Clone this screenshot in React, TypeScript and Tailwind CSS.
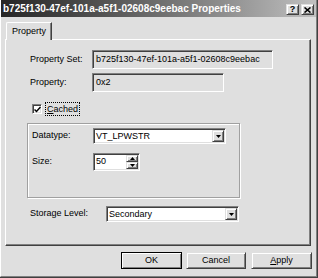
import React from "react";

const sunken =
  "border-t border-l border-t-[#808080] border-l-[#808080] border-r border-b border-r-white border-b-white shadow-[inset_1px_1px_0_#404040,inset_-1px_-1px_0_#dfdfdf]";
const raised =
  "border-t border-l border-t-[#dfdfdf] border-l-[#dfdfdf] border-r border-b border-r-[#404040] border-b-[#404040] shadow-[inset_1px_1px_0_#ffffff,inset_-1px_-1px_0_#808080]";

function DropArrow() {
  return (
    <svg width="5" height="3" viewBox="0 0 5 3">
      <path d="M0 0h5L2.5 3z" fill="#000" />
    </svg>
  );
}

function Combo({ value, width }: { value: string; width: string }) {
  return (
    <div className={`${width} h-[16px] bg-white flex items-center ${sunken}`}>
      <span className="flex-1 pl-[2px] leading-none">{value}</span>
      <div className={`w-[12px] h-[12px] mr-[1px] bg-[#dfdfdf] flex items-center justify-center ${raised}`}>
        <DropArrow />
      </div>
    </div>
  );
}

function Button({ label, className }: { label: React.ReactNode; className?: string }) {
  return (
    <div
      className={`h-[17px] flex items-center justify-center bg-[#dfdfdf] ${raised} ${className ?? ""}`}
    >
      {label}
    </div>
  );
}

export default function App() {
  return (
    <div
      className="w-[318px] h-[278px] flex flex-col bg-[#dfdfdf] border-r border-b border-[#404040] text-[9px] text-black"
      style={{ fontFamily: '"Liberation Sans", Arial, sans-serif' }}
    >
      <div className="flex-1 flex flex-col border-l border-l-white border-r border-b border-[#808080]">
        {/* title bar */}
        <div className="h-[17px] flex items-center justify-between pl-[2px] pr-[2px] bg-gradient-to-r from-[#262626] to-[#c0c0c0]">
          <span className="text-white font-bold text-[10px] leading-none">
            b725f130-47ef-101a-a5f1-02608c9eebac Properties
          </span>
          <div className="flex gap-[2px] pt-[2px]">
            <div className={`w-[13px] h-[11px] bg-[#dfdfdf] flex items-center justify-center font-bold text-[9px] leading-none ${raised}`}>
              ?
            </div>
            <div className={`w-[13px] h-[11px] bg-[#dfdfdf] flex items-center justify-center ${raised}`}>
              <svg width="7" height="6" viewBox="0 0 7 6">
                <path d="M0.5 0.5L6.5 5.5M6.5 0.5L0.5 5.5" stroke="#000" strokeWidth="1.6" />
              </svg>
            </div>
          </div>
        </div>

        {/* tab */}
        <div className="mt-[5px] ml-[5px] relative z-10 -mb-[1px] w-[46px] h-[18px] bg-[#dfdfdf] border-l border-t border-white rounded-tl-[2px] border-r border-r-[#404040] shadow-[inset_-1px_0_0_#808080] flex items-center justify-center">
          Property
        </div>

        {/* panel */}
        <div className="ml-[4px] w-[306px] h-[207px] flex flex-col border-l border-t border-white border-r border-b border-r-[#404040] border-b-[#404040] shadow-[inset_-1px_-1px_0_#808080]">
          <div className="mt-[10px] h-[19px] flex items-center pl-[24px]">
            <span className="w-[62px]">Property Set:</span>
            <div className={`w-[181px] h-[19px] flex items-center pl-[3px] ${sunken}`}>
              b725f130-47ef-101a-a5f1-02608c9eebac
            </div>
          </div>
          <div className="mt-[4px] h-[19px] flex items-center pl-[24px]">
            <span className="w-[62px]">Property:</span>
            <div className={`w-[132px] h-[19px] flex items-center pl-[3px] ${sunken}`}>0x2</div>
          </div>

          <div className="mt-[10px] h-[14px] flex items-center pl-[26px]">
            <div className={`w-[10px] h-[10px] bg-white flex items-center justify-center ${sunken}`}>
              <svg width="7" height="7" viewBox="0 0 7 7">
                <path d="M0.5 3.5L2.5 5.5L6.5 1" stroke="#000" strokeWidth="1.5" fill="none" />
              </svg>
            </div>
            <span className="ml-[3px] px-[1px] border border-dotted border-black leading-[12px]">
              <span className="underline">C</span>ached
            </span>
          </div>

          {/* group box */}
          <div className="mt-[7px] ml-[21px] w-[213px] h-[75px] flex flex-col border border-[#a0a0a0] shadow-[inset_1px_1px_0_#ffffff,1px_1px_0_#ffffff]">
            <div className="mt-[4px] h-[16px] flex items-center pl-[4px]">
              <span className="w-[61px]">Datatype:</span>
              <Combo value="VT_LPWSTR" width="w-[133px]" />
            </div>
            <div className="mt-[9px] h-[18px] flex items-center pl-[4px]">
              <span className="w-[61px]">Size:</span>
              <div className={`w-[47px] h-[18px] bg-white flex items-center ${sunken}`}>
                <span className="flex-1 pl-[2px]">50</span>
                <div className="flex flex-col mr-[1px]">
                  <div className={`w-[12px] h-[7px] bg-[#dfdfdf] flex items-center justify-center ${raised}`}>
                    <svg width="5" height="3" viewBox="0 0 5 3">
                      <path d="M0 3h5L2.5 0z" fill="#000" />
                    </svg>
                  </div>
                  <div className={`w-[12px] h-[7px] bg-[#dfdfdf] flex items-center justify-center ${raised}`}>
                    <DropArrow />
                  </div>
                </div>
              </div>
            </div>
          </div>

          <div className="mt-[8px] h-[16px] flex items-center pl-[24px]">
            <span className="w-[76px]">Storage Level:</span>
            <Combo value="Secondary" width="w-[133px]" />
          </div>
        </div>

        {/* buttons */}
        <div className="mt-[6px] flex justify-end pr-[4px]">
          <Button label="OK" className="w-[61px] outline outline-1 outline-black -outline-offset-1" />
          <Button label="Cancel" className="w-[60px] ml-[4px]" />
          <Button
            label={
              <span>
                <span className="underline">A</span>pply
              </span>
            }
            className="w-[61px] ml-[5px]"
          />
        </div>
      </div>
    </div>
  );
}
